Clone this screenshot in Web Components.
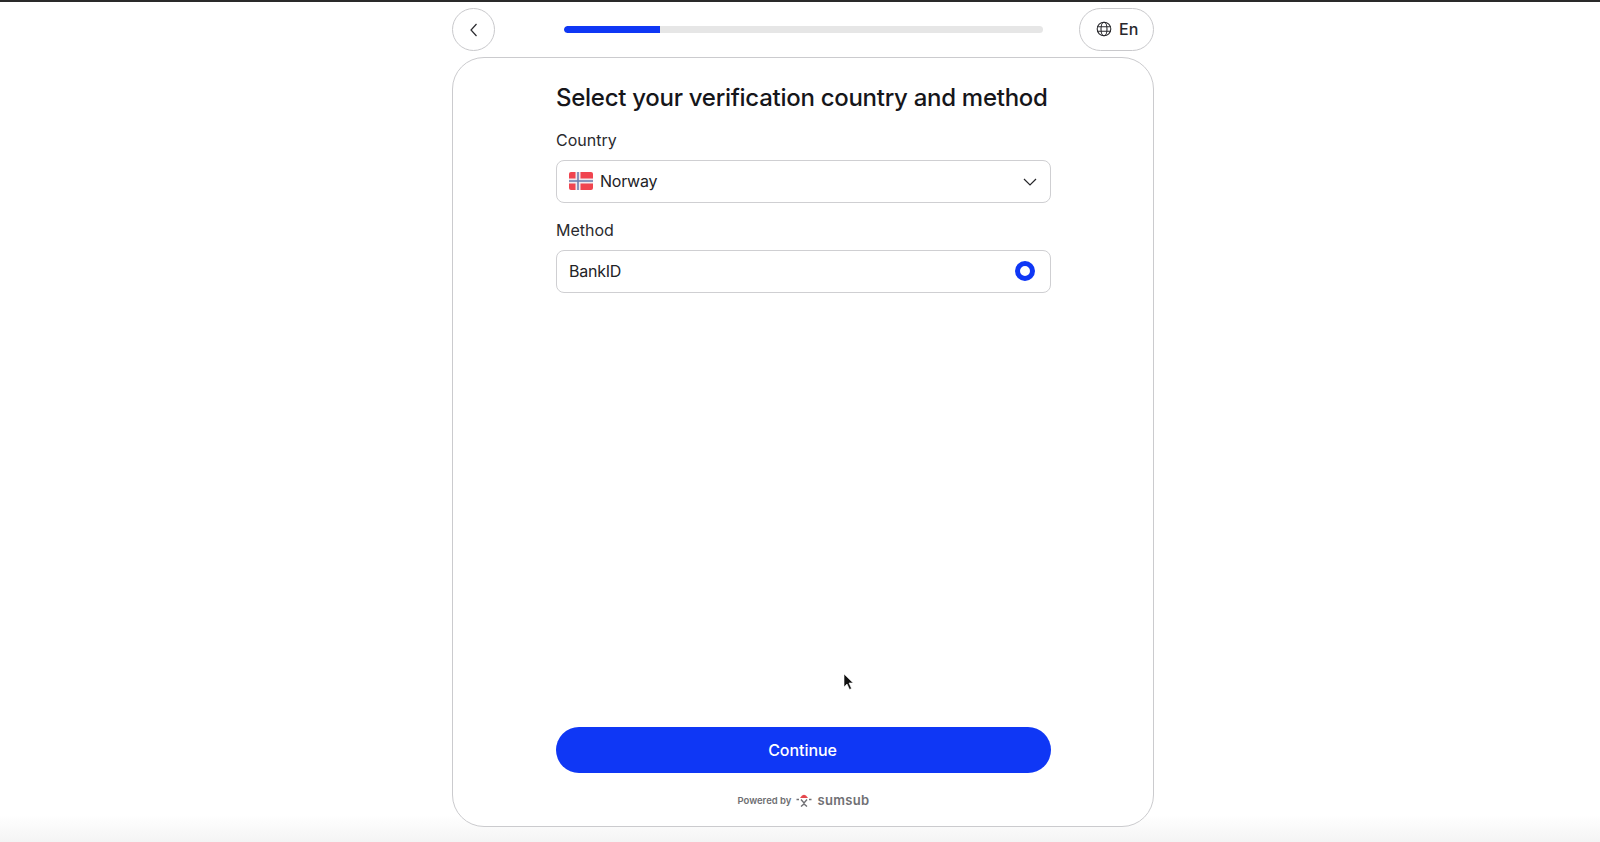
<!DOCTYPE html>
<html lang="en">
<head>
<meta charset="utf-8">
<title>Verification</title>
<style>
    html, body { margin: 0; height: 100%; }
    body {
        background: linear-gradient(#fff 815px, #f4f4f4 842px);
        font-family: Inter, "Noto Sans", sans-serif;
        color: #1a1a1e;
        overflow: hidden;
    }
</style>
</head>
<body>
<verify-page>
    <top-bar slot="top" progress="20"></top-bar>
    <step-card>
        <h-title>Select your verification country and method</h-title>
        <form-field label="Country">
            <svg slot="start" width="24" height="18" viewBox="0 0 24 18">
                <rect width="24" height="18" rx="2" fill="#f0444f"/>
                <rect x="6.5" width="5" height="18" fill="#f0e9ee"/>
                <rect y="6.5" width="24" height="5" fill="#f0e9ee"/>
                <rect x="8.2" width="1.6" height="18" fill="#6f7fb0"/>
                <rect y="8.2" width="24" height="1.6" fill="#6f7fb0"/>
            </svg>
            Norway
            <svg slot="end" width="14" height="8" viewBox="0 0 14 8" fill="none" stroke="#26262a" stroke-width="1.2" style="margin:2px 1px 0 0">
                <path d="M1 1l6 6 6-6"/>
            </svg>
        </form-field>
        <form-field label="Method">
            BankID
            <radio-dot slot="end"></radio-dot>
        </form-field>
        <main-button slot="foot">Continue</main-button>
        <powered-by slot="foot"></powered-by>
    </step-card>
    <mouse-cursor slot="over"></mouse-cursor>
</verify-page>

<script>
function def(name, html, setup) {
    customElements.define(name, class extends HTMLElement {
        constructor() {
            super()
            this.attachShadow({ mode: "open" }).innerHTML = html
        }
        connectedCallback() {
            if (setup) setup(this, this.shadowRoot)
        }
    })
}

def("verify-page", /*html*/`
    <style>
        :host { display: flex; flex-direction: column; height: 842px; box-sizing: border-box; border-top: 2px solid #2a2a2a; align-items: center; position: relative; padding-left: 6px; }
        .col { display: flex; flex-direction: column; width: 702px; height: 100%; padding-top: 6px; padding-bottom: 15px; box-sizing: border-box; gap: 7px; }
    </style>
    <div class="col">
        <slot name="top"></slot>
        <slot></slot>
    </div>
    <slot name="over"></slot>
`)

def("top-bar", /*html*/`
    <style>
        :host { display: grid; grid-template-columns: 43px 1fr 75px; align-items: center; height: 42px; flex: none; }
        .circle { width: 43px; height: 43px; box-sizing: border-box; border: 1px solid #c9c9cc; border-radius: 50%; display: flex; align-items: center; justify-content: center; }
        .track { height: 7px; width: 479px; justify-self: center; background: #e6e6e6; border-radius: 4px; overflow: hidden; margin-left: 33px; }
        .fill { height: 100%; background: #0f37f5; width: 20%; border-radius: 4px 0 0 4px; }
        .lang { height: 43px; box-sizing: border-box; border: 1px solid #c9c9cc; border-radius: 22px; display: flex; align-items: center; gap: 7px; padding-left: 16px; padding-bottom: 1px; font-size: 16px; font-weight: 500; color: #28282c; }
    </style>
    <div class="circle">
        <svg width="10" height="16" viewBox="0 0 10 16" fill="none" stroke="#2a2a2e" stroke-width="1.2"><path d="M7.5 2L2 8l5.5 6"/></svg>
    </div>
    <div class="track"><div class="fill"></div></div>
    <div class="lang">
        <svg width="16" height="16" viewBox="0 0 16 16" fill="none" stroke="#2a2a2e" stroke-width="1.1">
            <circle cx="8" cy="8" r="6.8"/><ellipse cx="8" cy="8" rx="3" ry="6.8"/><path d="M1.2 5.7h13.6M1.2 10.3h13.6"/>
        </svg>
        <span>En</span>
    </div>
`)

def("step-card", /*html*/`
    <style>
        :host { display: flex; flex: 1; flex-direction: column; box-sizing: border-box; border: 1px solid #cbcbce; border-radius: 32px; padding: 25px 102px 17px 103px; background: #fff; }
        .body { display: flex; flex-direction: column; flex: 1; }
        .foot { display: flex; flex-direction: column; align-items: stretch; gap: 18px; }
    </style>
    <div class="body"><slot></slot></div>
    <div class="foot"><slot name="foot"></slot></div>
`)

def("h-title", /*html*/`
    <style>
        :host { display: block; font-size: 24px; line-height: 29px; font-weight: 500; color: #16161a; white-space: nowrap; letter-spacing: -.28px; margin-bottom: 18px; }
    </style>
    <slot></slot>
`)

def("form-field", /*html*/`
    <style>
        :host { display: block; margin-bottom: 17px; }
        label { display: block; font-size: 16px; line-height: 20px; color: #2a2a2e; margin-bottom: 10px; }
        .box { height: 43px; box-sizing: border-box; border: 1px solid #cfcfd2; border-radius: 8px; display: flex; align-items: center; padding: 0 12px 2px; gap: 7px; font-size: 16px; letter-spacing: -.25px; color: #222226; }
        .text { flex: 1; }
        ::slotted(svg) { display: block; }
    </style>
    <label></label>
    <div class="box">
        <slot name="start"></slot>
        <span class="text"><slot></slot></span>
        <slot name="end"></slot>
    </div>
`, (el, root) => {
    root.querySelector("label").textContent = el.getAttribute("label")
})

def("radio-dot", /*html*/`
    <style>
        :host { display: block; width: 20px; height: 20px; box-sizing: border-box; border: 5px solid #0f37f5; border-radius: 50%; margin-right: 3px; }
    </style>
`)

def("main-button", /*html*/`
    <style>
        :host { display: flex; height: 46px; align-items: center; justify-content: center; background: #0f37f5; color: #fff; border-radius: 23px; font-size: 16px; font-weight: 500; letter-spacing: -.05px; padding-right: 2px; }
    </style>
    <slot></slot>
`)

def("powered-by", /*html*/`
    <style>
        :host { display: flex; align-items: center; justify-content: center; height: 18px; color: #6e6e72; gap: 5px; }
        .small { font-size: 9.5px; font-weight: 600; }
        .word { font-size: 13px; font-weight: 600; letter-spacing: .35px; color: #707074; }
    </style>
    <span class="small">Powered by</span>
    <svg width="16" height="14" viewBox="0 0 16 14" fill="none">
        <path d="M4 5Q8-1.5 12 5z" fill="#e5484d"/>
        <path d="M.5 6.5h2.5M13 6.5h2.5M5 6.5l3 3.5 3-3.5M8 10v1M5 13.5l3-2.5 3 2.5" stroke="#707074" stroke-width="1.4"/>
    </svg>
    <span class="word">sumsub</span>
`)

def("mouse-cursor", /*html*/`
    <style>
        :host { position: absolute; left: 843px; top: 671px; display: block; width: 12px; height: 18px; }
    </style>
    <svg width="12" height="18" viewBox="0 0 12 18"><path d="M1 1v13l3-3 2.5 5.5 2-1L6 10h4.2z" fill="#111" stroke="#fff" stroke-width=".6"/></svg>
`)
</script>
</body>
</html>
